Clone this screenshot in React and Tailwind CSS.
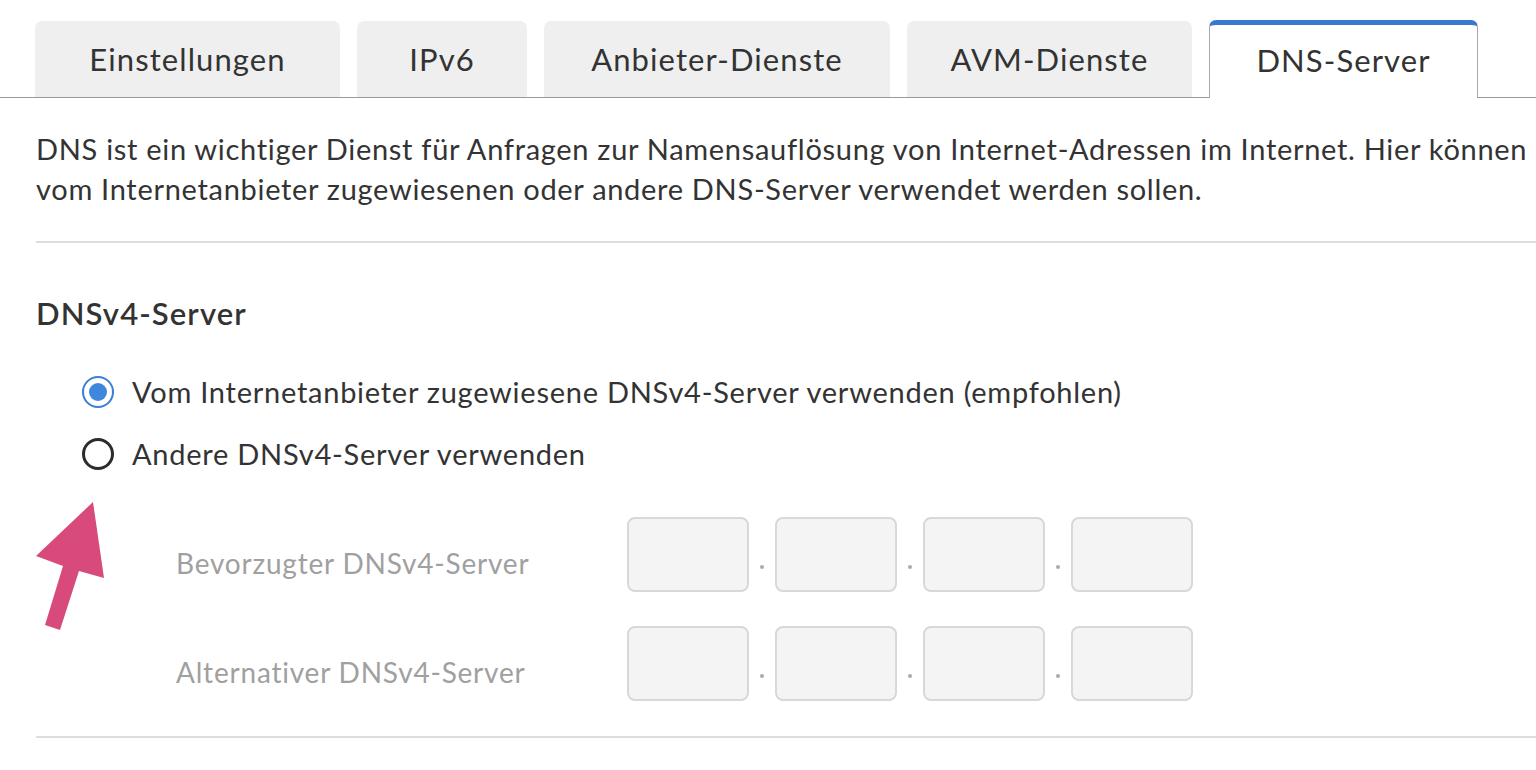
import React from "react";

const font = { fontFamily: "Lato, 'Noto Sans', sans-serif" };

function Tab({ label, w, active }) {
  if (active) {
    return (
      <div
        className={`${w} h-[78px] -mb-px pb-[3px] flex items-center justify-center bg-white rounded-t-[7px] border-t-[5px] border-t-[#3a78d0] border-x border-x-[#a8a8a8] text-[#333] text-[31px] tracking-[1.1px]`}
      >
        {label}
      </div>
    );
  }
  return (
    <div
      className={`${w} h-[76px] flex items-center justify-center bg-[#efefef] rounded-t-[7px] text-[#333] text-[31px] tracking-[1.1px]`}
    >
      {label}
    </div>
  );
}

function Radio({ checked, children }) {
  return (
    <div className="h-[62px] flex items-center pl-[82px] gap-[18px]">
      {checked ? (
        <span className="w-[32px] h-[32px] rounded-full border-[2.5px] border-[#3a7fd5] flex items-center justify-center">
          <span className="w-[18px] h-[18px] rounded-full bg-[#3f86dd]" />
        </span>
      ) : (
        <span className="w-[32px] h-[32px] rounded-full border-[3px] border-[#2c2c2c]" />
      )}
      <span className="text-[29px] tracking-[0.75px] text-[#333] whitespace-nowrap">{children}</span>
    </div>
  );
}

function Box() {
  return <div className="w-[122px] h-[75px] rounded-[8px] bg-[#f4f4f4] border-2 border-[#d8d8d8]" />;
}

function Dot() {
  return (
    <div className="w-[26px] h-[75px] flex items-center justify-center pt-[24px]">
      <span className="w-[4px] h-[4px] rounded-full bg-[#aaa]" />
    </div>
  );
}

function FieldRow({ label }) {
  return (
    <div className="flex items-center pl-[176px]">
      <div className="w-[451px] pt-[17px] text-[28px] tracking-[0.8px] text-[#a0a0a0] whitespace-nowrap">{label}</div>
      <Box />
      <Dot />
      <Box />
      <Dot />
      <Box />
      <Dot />
      <Box />
    </div>
  );
}

export default function App() {
  return (
    <div className="relative w-[1536px] h-[770px] overflow-hidden bg-white" style={font}>
      <div className="flex items-end gap-[17px] pl-[35px] pt-[20px] border-b border-[#9a9a9a]">
        <Tab label="Einstellungen" w="w-[305px]" />
        <Tab label="IPv6" w="w-[170px]" />
        <Tab label="Anbieter-Dienste" w="w-[346px]" />
        <Tab label="AVM-Dienste" w="w-[285px]" />
        <Tab label="DNS-Server" w="w-[269px]" active />
      </div>

      <div className="pl-[36px] overflow-hidden">
        <div className="pt-[31px] text-[29px] tracking-[0.7px] leading-[40px] text-[#333] whitespace-nowrap overflow-hidden">
          <div>
            DNS ist ein wichtiger Dienst für Anfragen zur Namensauflösung von Internet-Adressen im Internet. Hier können Sie
          </div>
          <div>vom Internetanbieter zugewiesenen oder andere DNS-Server verwendet werden sollen.</div>
        </div>

        <div className="mt-[32px] h-[2px] bg-[#dddddd]" />

        <div className="mt-[50px] text-[31px] tracking-[1.1px] leading-[40px] font-semibold text-[#333]">DNSv4-Server</div>

        <div className="mt-[28px] -ml-[36px]">
          <Radio checked>Vom Internetanbieter zugewiesene DNSv4-Server verwenden (empfohlen)</Radio>
          <Radio>Andere DNSv4-Server verwenden</Radio>
        </div>

        <div className="mt-[32px] -ml-[36px] flex flex-col gap-[34px]">
          <FieldRow label="Bevorzugter DNSv4-Server" />
          <FieldRow label="Alternativer DNSv4-Server" />
        </div>

        <div className="mt-[35px] h-[2px] bg-[#dddddd]" />
      </div>

      <svg
        className="absolute left-0 top-0 pointer-events-none"
        width="140"
        height="660"
        viewBox="0 0 140 660"
      >
        <polygon
          points="93,502 104,578 79,571 60,630 45,625 63,566 36,556"
          fill="#d94a7c"
        />
      </svg>
    </div>
  );
}
